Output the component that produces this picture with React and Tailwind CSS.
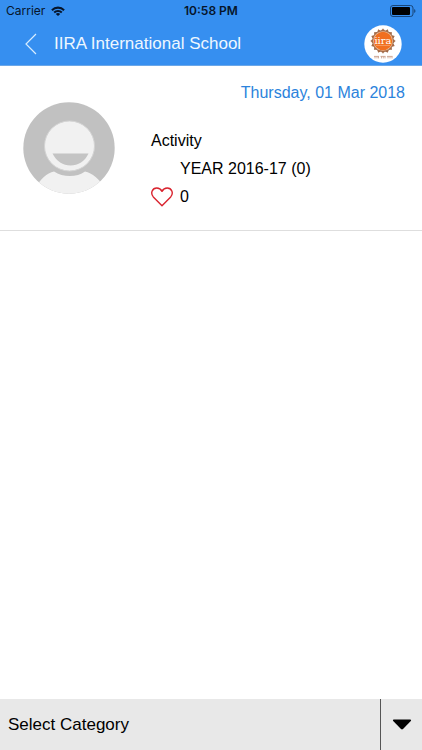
const FLAMES = Array.from({ length: 16 }, (_, i) => i * 22.5);

function WifiIcon() {
  return (
    <svg viewBox="0 0 14 10" className="h-[10px] w-[14px]" aria-hidden="true">
      <path d="M0.2 3.4a9.7 9.7 0 0 1 13.6 0L12.4 4.9a7.7 7.7 0 0 0-10.8 0Z" fill="#06152b" />
      <path d="M2.5 5.8a6.4 6.4 0 0 1 9 0L10.1 7.2a4.4 4.4 0 0 0-6.2 0Z" fill="#06152b" />
      <path d="M4.8 8a3.2 3.2 0 0 1 4.4 0L7 10Z" fill="#06152b" />
    </svg>
  );
}

function BatteryIcon() {
  return (
    <svg viewBox="0 0 26 12" className="h-[12px] w-[26px]" aria-hidden="true">
      <rect x="0.5" y="0.5" width="22.5" height="11" rx="2.5" fill="none" stroke="#174578" />
      <rect x="2" y="2" width="18" height="8" rx="1" fill="#000" />
      <path d="M24.2 4v4c1.7-.6 1.7-3.4 0-4Z" fill="#174578" />
    </svg>
  );
}

function SchoolLogo() {
  return (
    <svg viewBox="0 0 38 38" className="size-[38px]" role="img" aria-label="iira">
      <circle cx="19" cy="19" r="18.7" fill="#fff" />
      {FLAMES.map((angle) => (
        <path
          key={angle}
          d="M16.7 6.2C17 4.8 18.4 4.7 19 3.2C19.6 4.7 21 4.8 21.3 6.2Z"
          fill="#a36b48"
          transform={`rotate(${angle} 19 16)`}
        />
      ))}
      <circle cx="19" cy="16" r="10.4" fill="#a36b48" />
      <circle cx="19" cy="16" r="9.8" fill="#f5c9a5" />
      <circle cx="19" cy="16" r="9.2" fill="#f16f20" />
      <text x="19" y="19" textAnchor="middle" fontSize="10" fontFamily="DejaVu Serif, serif" fill="#fff">
        iira
      </text>
      <path d="M12 20.5h14" stroke="#f9b184" strokeWidth="0.6" />
      <path
        d="M10 31.4h5M16.5 31.4h5M23 31.4h5.5M11 31.4v2M13 31.4v2M14.5 31.4v2M17.5 31.4v2M19.3 31.4v2M21 31.4v2M24 31.4v2M26 31.4v2M28 31.4v2"
        stroke="#c79b86"
        strokeWidth="0.8"
        fill="none"
      />
    </svg>
  );
}

function Avatar() {
  return (
    <svg viewBox="0 0 92 92" className="size-[92px] shrink-0" role="img" aria-label="Profile picture">
      <defs>
        <clipPath id="avatar-circle">
          <circle cx="46" cy="46" r="45.7" />
        </clipPath>
      </defs>
      <g clipPath="url(#avatar-circle)">
        <rect width="92" height="92" fill="#c1c1c1" />
        <path
          d="M13 86C17 77 24 71 31 69.500C40 75.500 54 75.500 62 69.500C69 71 77 77 81 86V92H13Z"
          fill="#f1f1f1"
        />
        <circle cx="46.5" cy="44" r="25" fill="#f1f1f1" stroke="#d3d3d3" />
        <path d="M29.500 51.500H65.500C62 59.500 55 63.500 47.500 63.500C40 63.500 33.500 59.500 29.500 51.500Z" fill="#c4c4c4" />
      </g>
    </svg>
  );
}

function HeartIcon() {
  return (
    <svg viewBox="0 0 22 20" className="h-[20px] w-[22px]" aria-hidden="true">
      <path
        d="M11 18.700L2.300 9.900C-1 6 1.400 1 5.800 1C8.500 1 10 2.400 11 4.300C12 2.400 13.500 1 16.200 1C20.600 1 23 6 19.700 9.900Z"
        fill="none"
        stroke="#d9232e"
        strokeWidth="1.400"
        strokeLinejoin="round"
      />
    </svg>
  );
}

export default function App() {
  return (
    <div className="flex min-h-screen flex-col bg-white font-['Liberation_Sans',Arial,sans-serif] text-black">
      <header className="border-b border-[#6ba7e8] bg-[#368ff0]">
        <div className="grid h-[22px] grid-cols-[1fr_auto_1fr] items-center px-[6px] font-['Inter',sans-serif] text-[12px] text-[#06152b]">
          <span className="flex items-center gap-[6px]">
            Carrier
            <WifiIcon />
          </span>
          <span className="font-semibold">10:58 PM</span>
          <span className="flex justify-end">
            <BatteryIcon />
          </span>
        </div>
        <div className="flex h-[43px] items-center pr-[20px] pl-[24px]">
          <button type="button" aria-label="Back" className="mr-[16px]">
            <svg viewBox="0 0 14 22" className="h-[22px] w-[14px]" aria-hidden="true">
              <path d="M12 1L2 11L12 21" fill="none" stroke="#d8edff" strokeWidth="1.2" />
            </svg>
          </button>
          <h1 className="flex-1 text-[17px] text-[#eef7ff]">IIRA International School</h1>
          <SchoolLogo />
        </div>
      </header>

      <main className="flex-1">
        <article className="border-b border-[#dedede] px-[17px] pt-[15px] pb-[19px]">
          <p className="text-right text-[16px] leading-[24px] text-[#2b83dc]">
            <time dateTime="2018-03-01">Thursday, 01 Mar 2018</time>
          </p>
          <div className="flex gap-[36px] pl-[6px]">
            <div className="-mt-[3px]">
              <Avatar />
            </div>
            <div className="pt-[22px] text-[16px] leading-[28px]">
              <h2>Activity</h2>
              <p className="pl-[29px]">YEAR 2016-17 (0)</p>
              <button type="button" aria-label="Like, 0 likes" className="flex items-center gap-[7px]">
                <HeartIcon />
                <span>0</span>
              </button>
            </div>
          </div>
        </article>
      </main>

      <footer className="relative bg-[#e8e8e8]">
        <select
          aria-label="Select Category"
          className="block h-[51px] w-full appearance-none pr-[50px] pl-[8px] text-[17px] outline-none"
        >
          <option>Select Category</option>
        </select>
        <span className="pointer-events-none absolute inset-y-0 right-0 flex w-[42px] items-center justify-center border-l border-[#555]">
          <svg viewBox="0 0 20 11" className="h-[11px] w-[20px]" aria-hidden="true">
            <path d="M1.500 0.500H18.500Q19.600 1 18.800 2L11 10Q10 10.900 9 10L1.200 2Q0.400 1 1.500 0.500Z" fill="#000" />
          </svg>
        </span>
      </footer>
    </div>
  );
}
